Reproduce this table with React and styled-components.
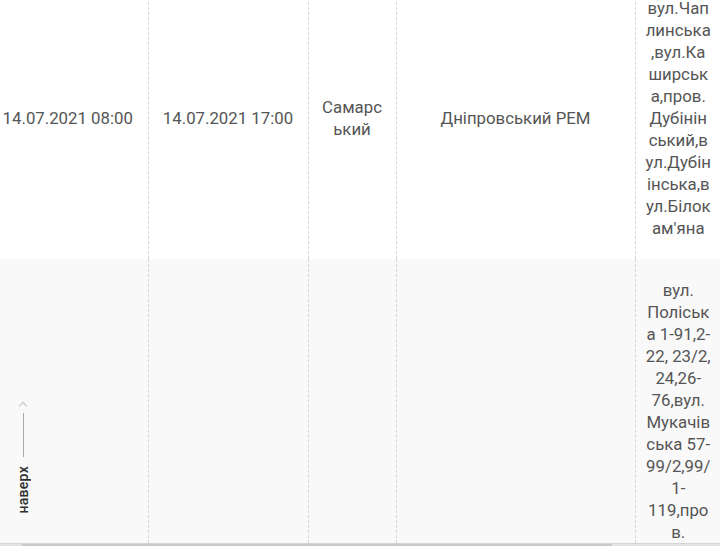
import React from 'react';
import styled, { createGlobalStyle } from 'styled-components';

const GlobalStyle = createGlobalStyle`
    html, body {
        margin: 0;
        padding: 0;
        background: #ffffff;
        overflow: hidden;
    }
    body {
        font-family: Roboto, "Noto Sans", "Liberation Sans", sans-serif;
    }
`;

const Page = styled.div`
    position: relative;
    width: 720px;
    height: 546px;
    overflow: hidden;
`;

const TableWrap = styled.div`
    margin-top: -23px;
    margin-left: -12px;
`;

const Table = styled.table`
    border-collapse: collapse;
    table-layout: fixed;
    width: 733px;
`;

const Col = styled.col`
    width: ${props => props.$w}px;
`;

const Row = styled.tr`
    background: ${props => (props.$striped ? '#f9f9f9' : '#ffffff')};
`;

const Cell = styled.td`
    box-sizing: border-box;
    padding: 20px ${props => props.$pad || 11}px;
    border-left: 1px dashed #d6d6d6;
    color: #555555;
    font-size: 16.8px;
    line-height: 22px;
    text-align: center;
    vertical-align: middle;
    overflow-wrap: anywhere;
    &:first-child {
        border-left: none;
    }
`;

// the street list wraps mid-word in the source; keep those breaks
const Line = styled.span`
    display: block;
    white-space: nowrap;
`;

const ScrollTrack = styled.div`
    position: absolute;
    left: 0;
    right: 0;
    bottom: 0;
    height: 2px;
    display: flex;
    background: #e4e4e4;
    border-top: 1px solid #d4d4d4;
`;

const ScrollThumb = styled.div`
    margin-left: 22px;
    width: 590px;
    background: #c9c9c9;
`;

const ToTop = styled.div`
    position: absolute;
    left: 14px;
    top: 399px;
    width: 18px;
    display: flex;
    flex-direction: column;
    align-items: center;
    gap: 7px;
`;

const Arrow = styled.span`
    width: 5px;
    height: 5px;
    border-top: 1px solid #c4c4c4;
    border-left: 1px solid #c4c4c4;
    transform: rotate(45deg);
    margin-top: 4px;
`;

const Stem = styled.span`
    width: 1px;
    height: 44px;
    background: #a8a8a8;
    margin-top: -3px;
`;

const ToTopLabel = styled.span`
    writing-mode: vertical-rl;
    transform: rotate(180deg);
    font-size: 14px;
    font-weight: 500;
    color: #2e2e2e;
    letter-spacing: 0.3px;
    margin-top: 2px;
`;

const rows = [
    {
        from: '14.07.2021 08:00',
        to: '14.07.2021 17:00',
        district: 'Самарський',
        rem: 'Дніпровський РЕМ',
        streets: [
            'вул.Чап', 'линська', ',вул.Ка', 'ширськ', 'а,пров.', 'Дубінін',
            'ський,в', 'ул.Дубін', 'інська,в', 'ул.Білок', "ам'яна",
        ],
    },
    {
        from: '',
        to: '',
        district: '',
        rem: '',
        streets: [
            'вул.', 'Поліськ', 'а 1-91,2-', '22, 23/2,', '24,26-', '76,вул.',
            'Мукачів', 'ська 57-', '99/2,99/', '1-', '119,про', 'в.',
        ],
    },
];

export default function App() {
    return (
        <Page>
            <GlobalStyle />
            <TableWrap>
                <Table>
                    <colgroup>
                        <Col $w={160} />
                        <Col $w={160} />
                        <Col $w={88} />
                        <Col $w={239} />
                        <Col $w={86} />
                    </colgroup>
                    <tbody>
                        {rows.map((r, i) => (
                            <Row key={i} $striped={i % 2 === 1}>
                                <Cell>{r.from}</Cell>
                                <Cell>{r.to}</Cell>
                                <Cell>{r.district}</Cell>
                                <Cell>{r.rem}</Cell>
                                <Cell $pad={6}>
                                    {r.streets.map((s, j) => (
                                        <Line key={j}>{s}</Line>
                                    ))}
                                </Cell>
                            </Row>
                        ))}
                    </tbody>
                </Table>
            </TableWrap>
            <ToTop>
                <Arrow />
                <Stem />
                <ToTopLabel>наверх</ToTopLabel>
            </ToTop>
            <ScrollTrack>
                <ScrollThumb />
            </ScrollTrack>
        </Page>
    );
}
